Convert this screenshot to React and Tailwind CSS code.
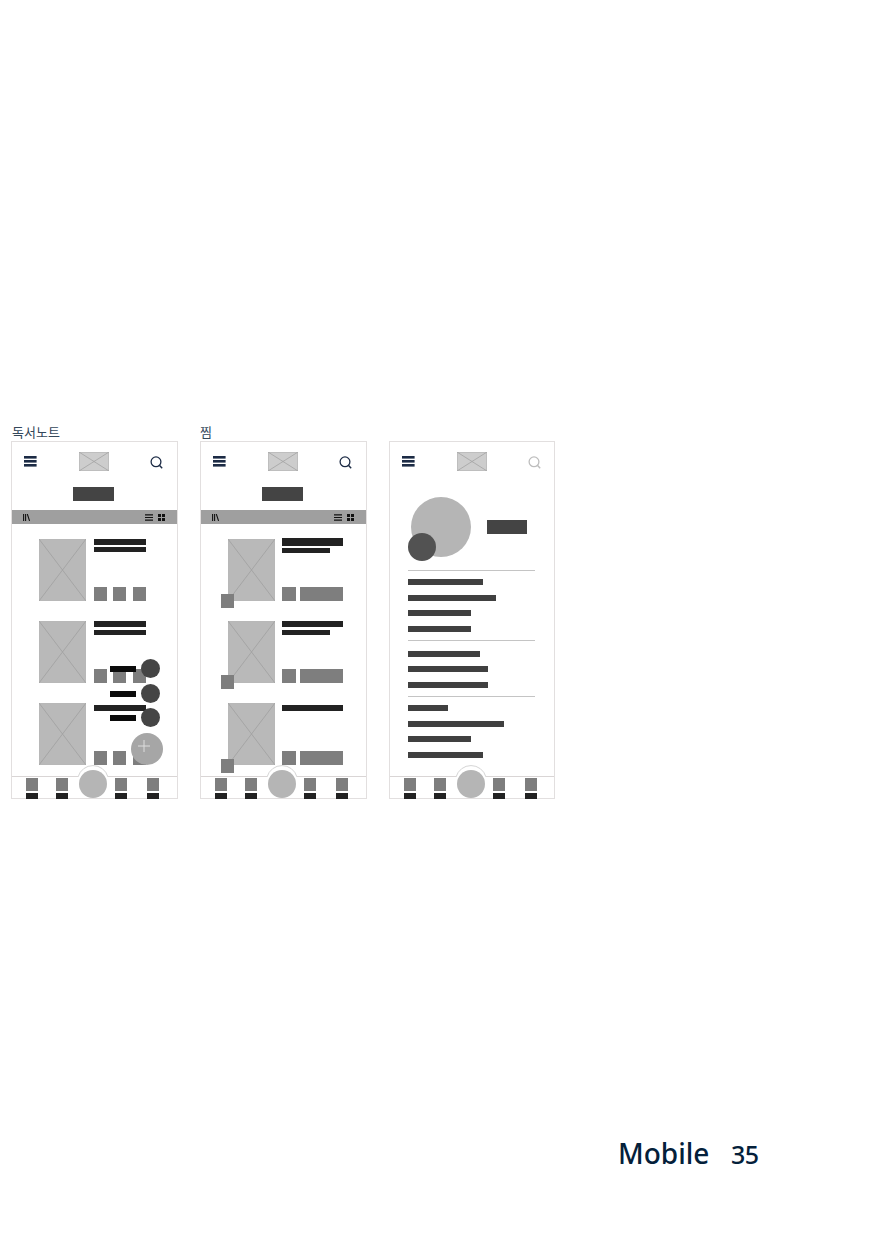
const F = '"Noto Sans CJK KR","Noto Sans",sans-serif';

function Menu() {
  return (
    <svg width="13" height="11" viewBox="0 0 13 11" className="block">
      <rect x="0" y="0" width="12.6" height="2.6" fill="#1c2b45" />
      <rect x="0" y="4" width="12.6" height="2.6" fill="#1c2b45" />
      <rect x="0" y="8" width="12.6" height="2.6" fill="#1c2b45" />
    </svg>
  );
}

function Search({ color = "#1c2b45" }) {
  return (
    <svg width="13" height="13" viewBox="0 0 13 13" fill="none" className="mt-[3px] block">
      <circle cx="6" cy="5.8" r="4.9" stroke={color} strokeWidth="1.3" />
      <path d="M9.6 9.4 L12.2 12.2" stroke={color} strokeWidth="1.4" />
    </svg>
  );
}

function Crossed({ w, h, fill, line }) {
  return (
    <svg width={w} height={h} viewBox={`0 0 ${w} ${h}`} className="block shrink-0">
      <rect x="0.5" y="0.5" width={w - 1} height={h - 1} fill={fill} stroke={line} strokeOpacity="0.6" />
      <path d={`M0 0 L${w} ${h} M${w} 0 L0 ${h}`} stroke={line} strokeWidth="0.8" />
    </svg>
  );
}

function Header({ searchColor, right = "pr-[14px]" }) {
  return (
    <div className={`flex h-[38px] shrink-0 items-center pl-[12px] ${right}`}>
      <Menu />
      <div className="ml-[42px]">
        <Crossed w={30} h={19} fill="#cdcdcd" line="#a3a3a3" />
      </div>
      <div className="ml-auto">
        <Search color={searchColor} />
      </div>
    </div>
  );
}

function ToolBar() {
  return (
    <>
      <div className="mt-[7px] flex justify-center pr-[2px]">
        <div className="h-[14px] w-[41px] bg-[#444444]" />
      </div>
      <div className="mt-[9px] flex h-[14px] shrink-0 items-center justify-between bg-[#9f9f9f] pl-[11px] pr-[12px]">
        <svg width="7" height="7" viewBox="0 0 7 7" className="block">
          <path d="M0.6 0V7 M2.6 0V7 M4.3 0 L6.6 7" stroke="#111111" strokeWidth="1.1" />
        </svg>
        <div className="flex items-center gap-[5px]">
          <svg width="8" height="7" viewBox="0 0 8 7" className="block">
            <path d="M0 0.8H8 M0 3.5H8 M0 6.2H8" stroke="#111111" strokeWidth="1.2" />
          </svg>
          <svg width="7" height="7" viewBox="0 0 7 7" className="block">
            <rect x="0" y="0" width="3" height="3" fill="#111111" />
            <rect x="4" y="0" width="3" height="3" fill="#111111" />
            <rect x="0" y="4" width="3" height="3" fill="#111111" />
            <rect x="4" y="4" width="3" height="3" fill="#111111" />
          </svg>
        </div>
      </div>
    </>
  );
}

function Cover({ pin }) {
  return (
    <div className="relative shrink-0">
      <Crossed w={47} h={62} fill="#b9b9b9" line="#a0a0a0" />
      {pin && <div className={`absolute -left-[7px] h-[14px] w-[13px] bg-[#7e7e7e] ${pin}`} />}
    </div>
  );
}

function NoteItem({ one, second = "mt-[3px]" }) {
  return (
    <div className="flex h-[62px] gap-[8px]">
      <Cover />
      <div className="flex w-[52px] flex-col">
        <div className={`${one ? "mt-[2px]" : ""} h-[6px] bg-[#222222]`} />
        {!one && <div className={`${second} h-[5px] bg-[#222222]`} />}
        <div className="mt-auto flex justify-between">
          <div className="h-[14px] w-[13px] bg-[#7e7e7e]" />
          <div className="-ml-[1px] h-[14px] w-[13px] bg-[#7e7e7e]" />
          <div className="h-[14px] w-[13px] bg-[#7e7e7e]" />
        </div>
      </div>
    </div>
  );
}

function PinItem({ top, second, pin }) {
  return (
    <div className="flex h-[62px] gap-[7px]">
      <Cover pin={pin} />
      <div className="flex w-[61px] flex-col">
        <div className={`${top} bg-[#222222]`} />
        {second && <div className={`${second} h-[5px] w-[48px] bg-[#222222]`} />}
        <div className="mt-auto flex gap-[4px]">
          <div className="h-[14px] w-[14px] bg-[#7e7e7e]" />
          <div className="h-[14px] flex-1 bg-[#7e7e7e]" />
        </div>
      </div>
    </div>
  );
}

function NavCell({ className = "" }) {
  return (
    <div className={`mt-px flex w-[12px] flex-col ${className}`}>
      <div className="h-[13px] bg-[#7e7e7e]" />
      <div className="mt-[2px] h-[6px] bg-[#222222]" />
    </div>
  );
}

function Nav() {
  return (
    <div className="relative mt-auto flex h-[22px] shrink-0 items-start border-t border-[#d9d5d5] pl-[14px]">
      <NavCell />
      <NavCell className="ml-[18px]" />
      <NavCell className="ml-[47px]" />
      <NavCell className="ml-[20px]" />
      <svg width="32" height="13" viewBox="0 0 32 13" fill="none" className="absolute left-[65px] top-[-12px] block">
        <path d="M1.1 12.5 L1.1 11.8 A15.5 15.5 0 0 1 30.9 11.8 L30.9 12.5 Z" fill="#ffffff" />
        <path d="M1.1 11.8 A15.5 15.5 0 0 1 30.9 11.8" stroke="#d5d5d5" strokeWidth="1" />
      </svg>
      <div className="absolute left-[67px] top-[-7px] h-[28px] w-[28px] rounded-full bg-[#b5b5b5]" />
    </div>
  );
}

function Frame({ children, w = "w-[167px]" }) {
  return (
    <div className={`relative flex h-[358px] ${w} flex-col border border-[#e2dfdf] bg-white`}>
      {children}
    </div>
  );
}

function Dial({ top }) {
  return (
    <div className={`absolute left-[98px] flex items-center gap-[5px] ${top}`}>
      <div className="h-[6px] w-[26px] bg-[#0b0b0b]" />
      <div className="h-[19px] w-[19px] rounded-full bg-[#454545]" />
    </div>
  );
}

function Line({ w }) {
  return <div className="h-[6px] bg-[#404040]" style={{ width: w }} />;
}

function Group({ widths }) {
  return (
    <div className="flex flex-col gap-[9.6px]">
      {widths.map((w, i) => (
        <Line key={i} w={w} />
      ))}
    </div>
  );
}

export default function App() {
  return (
    <div className="relative h-[1240px] w-[877px] bg-white" style={{ fontFamily: F }}>
      <div className="flex gap-[22px] pl-[11px] pt-[424px]">
        <div>
          <div className="h-[17px] pl-px text-[13px] leading-[15px] text-[#33475a]">독서노트</div>
          <Frame>
            <Header />
            <ToolBar />
            <div className="flex flex-col gap-[20px] pl-[27px] pt-[15px]">
              <NoteItem second="mt-[2px]" />
              <NoteItem />
              <NoteItem one />
            </div>
            <Nav />
            <Dial top="top-[217px]" />
            <Dial top="top-[242px]" />
            <Dial top="top-[266px]" />
            <div className="absolute left-[119px] top-[291px] flex h-[32px] w-[32px] items-center justify-center rounded-full bg-[#a6a6a6]">
              <svg width="12" height="12" viewBox="0 0 12 12" className="block -translate-x-[3px] -translate-y-[3px]">
                <path d="M6 0V12 M0 6H12" stroke="#dddddd" strokeWidth="1" />
              </svg>
            </div>
          </Frame>
        </div>
        <div>
          <div className="h-[17px] text-[13px] leading-[15px] text-[#33475a]">찜</div>
          <Frame>
            <Header />
            <ToolBar />
            <div className="flex flex-col gap-[20px] pl-[27px] pt-[15px]">
              <PinItem top="-mt-px h-[8px]" second="mt-[2px]" pin="top-[55px]" />
              <PinItem top="h-[6px]" second="mt-[3px]" pin="top-[54px]" />
              <PinItem top="mt-[2px] h-[6px]" pin="top-[56px]" />
            </div>
            <Nav />
          </Frame>
        </div>
        <div className="pt-[17px]">
          <Frame w="w-[166px]">
            <Header searchColor="#bdbdbd" right="pr-[13px]" />
            <div className="relative ml-[21px] mt-[17px] flex h-[60px] w-[60px] shrink-0 items-center">
              <div className="h-[60px] w-[60px] rounded-full bg-[#b5b5b5]" />
              <div className="absolute -left-[3px] top-[36px] h-[28px] w-[28px] rounded-full bg-[#525252]" />
              <div className="absolute left-[76px] top-[23px] h-[14px] w-[40px] bg-[#444444]" />
            </div>
            <div className="ml-[18px] mt-[13px] h-px w-[127px] bg-[#c4c4c4]" />
            <div className="ml-[18px] mt-[8px]">
              <Group widths={[75, 88, 63, 63]} />
            </div>
            <div className="ml-[18px] mt-[8px] h-px w-[127px] bg-[#c4c4c4]" />
            <div className="ml-[18px] mt-[10px]">
              <Group widths={[72, 80, 80]} />
            </div>
            <div className="ml-[18px] mt-[8px] h-px w-[127px] bg-[#c4c4c4]" />
            <div className="ml-[18px] mt-[8px]">
              <Group widths={[40, 96, 63, 75]} />
            </div>
            <Nav />
          </Frame>
        </div>
      </div>
      <div className="absolute left-[618px] top-[1134px] flex items-baseline text-[#04203a]" style={{ fontFamily: '"Noto Sans",sans-serif' }}>
        <span className="w-[113px] text-[28px] font-medium leading-[38px]">Mobile</span>
        <span className="text-[25px] font-medium leading-[38px] tracking-[-0.5px]">35</span>
      </div>
    </div>
  );
}
